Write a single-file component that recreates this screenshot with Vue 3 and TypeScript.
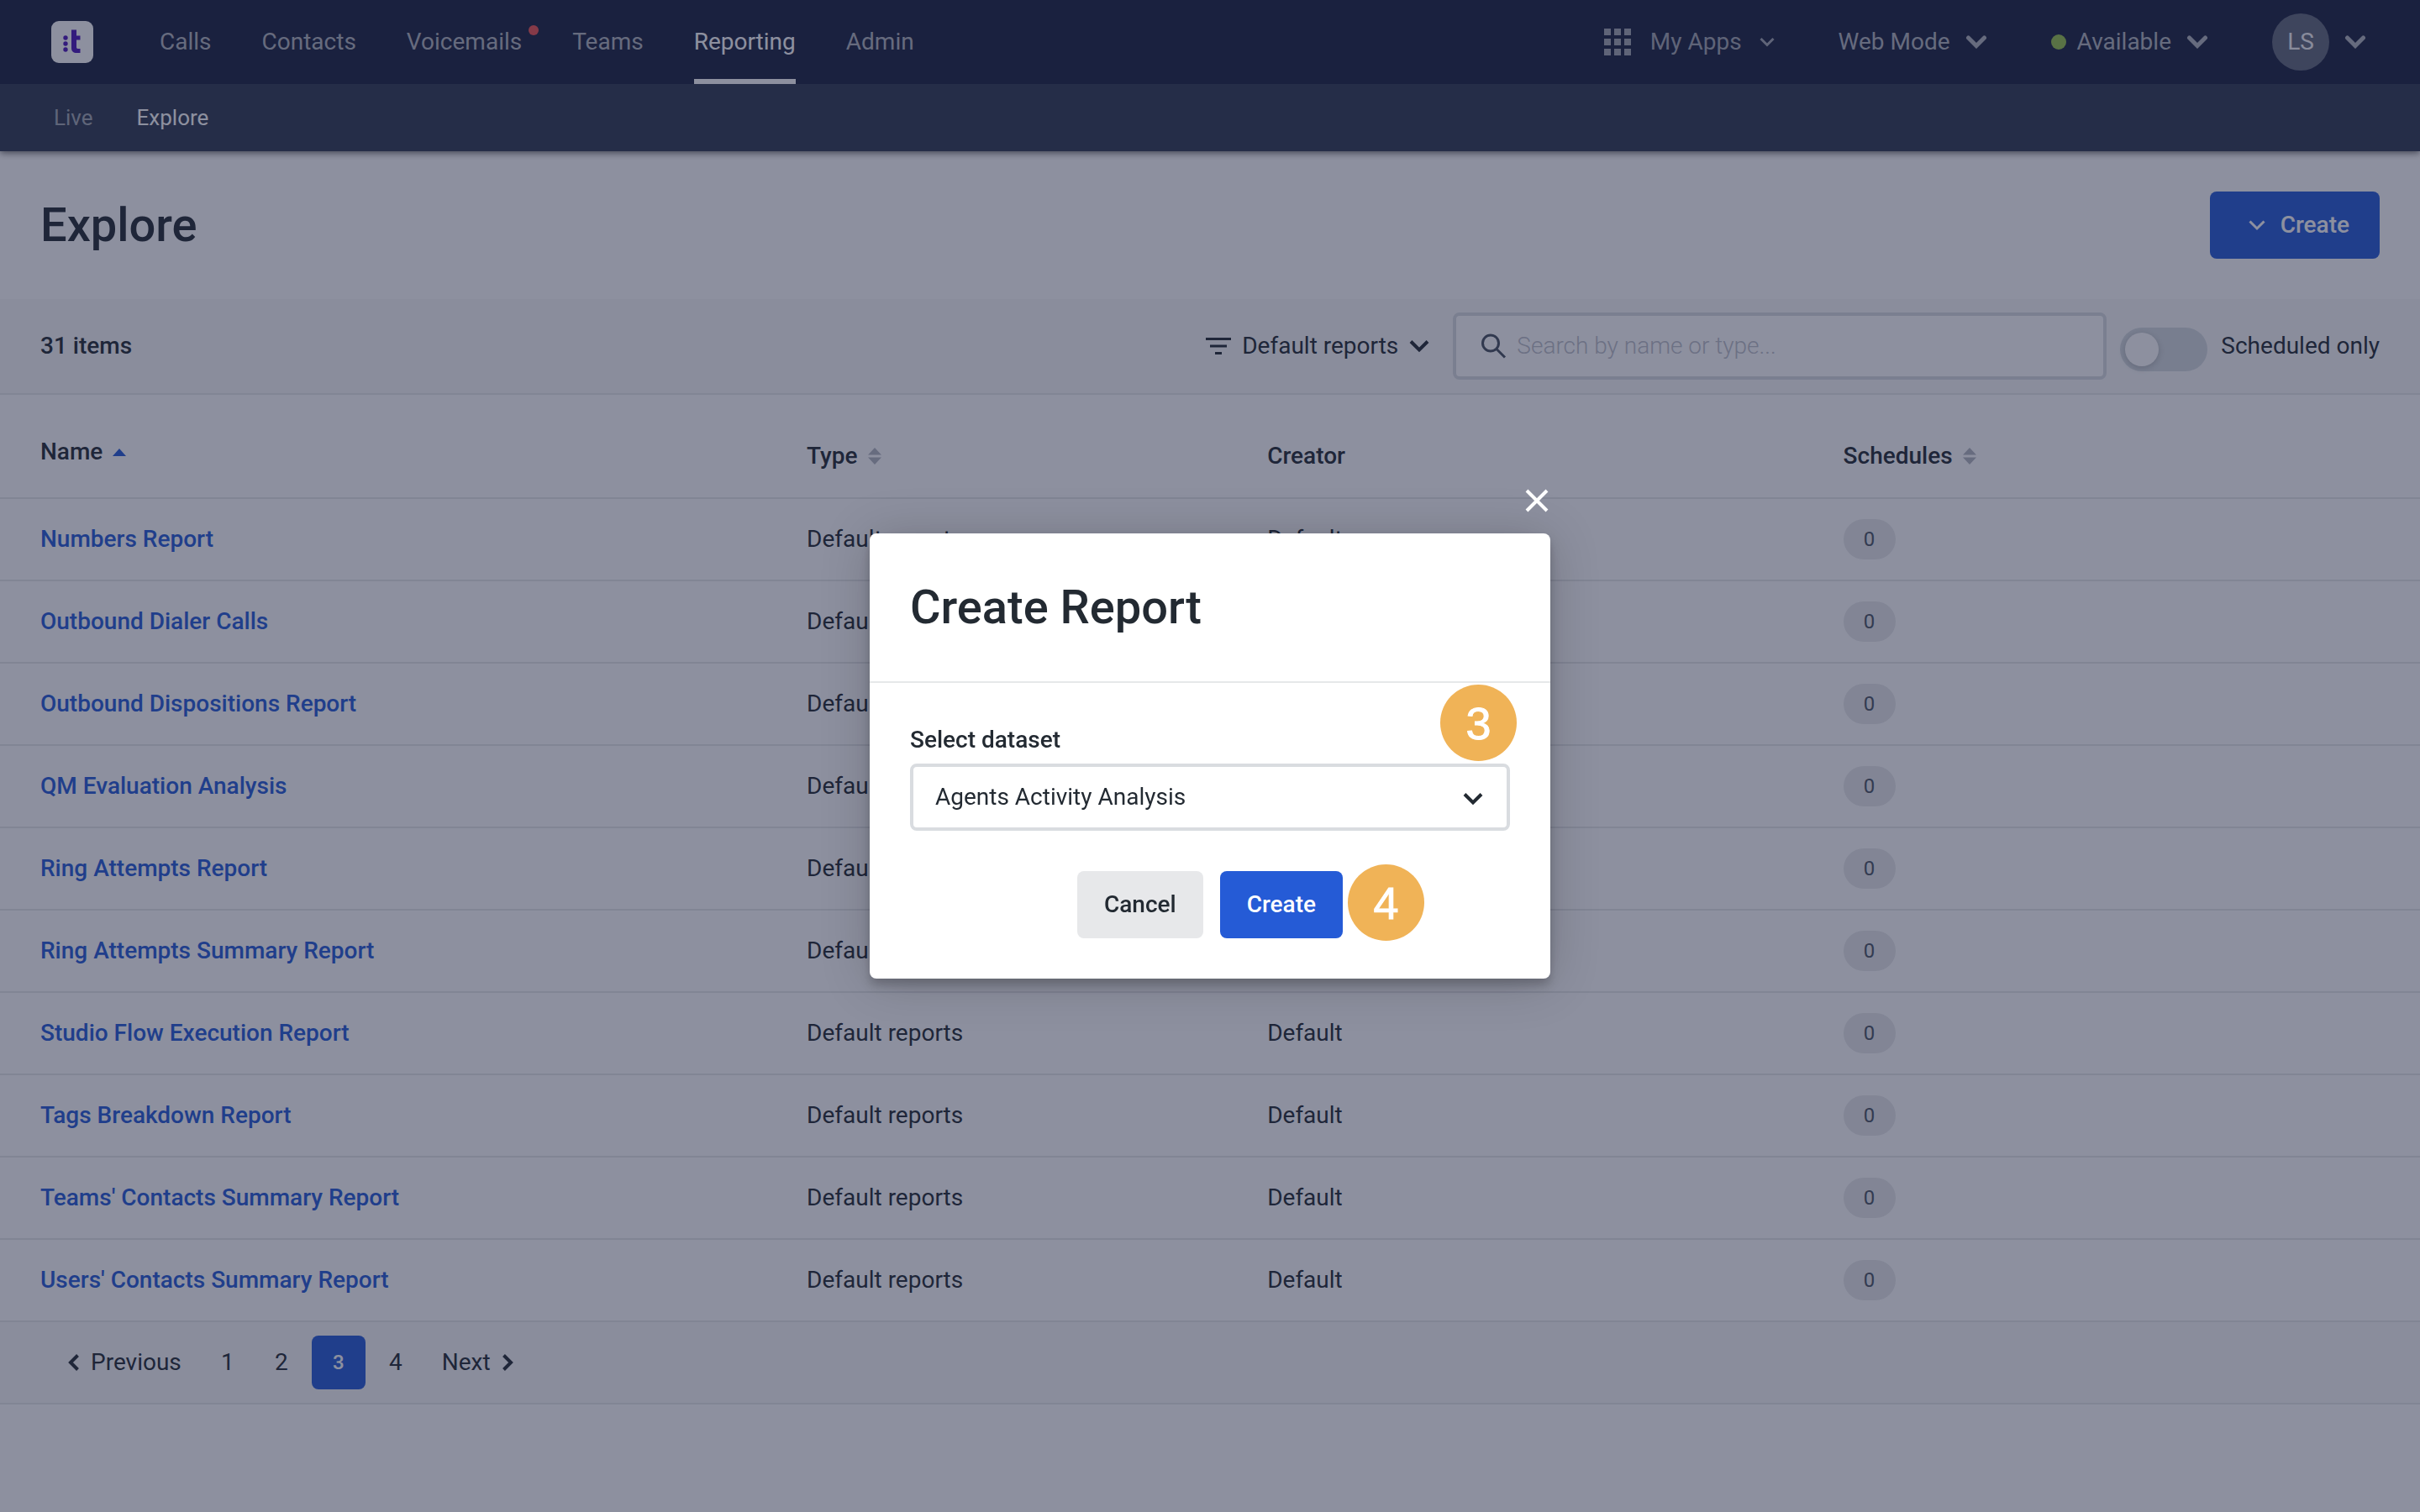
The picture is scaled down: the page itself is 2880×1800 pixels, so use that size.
<script setup lang="ts">
import { ref } from 'vue'

interface NavItem {
  label: string
  active?: boolean
  alert?: boolean
}

interface Column {
  label: string
  sort: 'asc' | 'both' | 'none'
  width: string
}

const navItems: NavItem[] = [
  { label: 'Calls' },
  { label: 'Contacts' },
  { label: 'Voicemails', alert: true },
  { label: 'Teams' },
  { label: 'Reporting', active: true },
  { label: 'Admin' },
]

const columns: Column[] = [
  { label: 'Name', sort: 'asc', width: '31.67%' },
  { label: 'Type', sort: 'both', width: '19.03%' },
  { label: 'Creator', sort: 'none', width: '23.8%' },
  { label: 'Schedules', sort: 'both', width: '25.5%' },
]

const reports: string[] = [
  'Numbers Report',
  'Outbound Dialer Calls',
  'Outbound Dispositions Report',
  'QM Evaluation Analysis',
  'Ring Attempts Report',
  'Ring Attempts Summary Report',
  'Studio Flow Execution Report',
  'Tags Breakdown Report',
  "Teams' Contacts Summary Report",
  "Users' Contacts Summary Report",
]

const pages = [1, 2, 3, 4]
const currentPage = ref(3)
const search = ref('')
const scheduledOnly = ref(false)
const dataset = ref('Agents Activity Analysis')
</script>

<template>
  <div class="page">
    <header class="header">
      <div class="topbar">
        <a href="#" class="logo" aria-label="Home">
          <svg width="50" height="50" viewBox="0 0 50 50">
            <rect width="50" height="50" rx="9" fill="#fff" />
            <circle cx="17" cy="20" r="2.7" />
            <circle cx="17" cy="27" r="2.7" />
            <circle cx="17" cy="34" r="2.7" />
            <path d="M24 10.500h6v7h4.500v5h-4.500v8.500c0 1.300.5 2 1.800 2h2.700v5h-4c-4.300 0-6.500-2-6.500-6z" />
          </svg>
        </a>
        <nav class="nav">
          <a v-for="item in navItems" :key="item.label" href="#" class="nav-link" :class="{ active: item.active }">
            {{ item.label }}<i v-if="item.alert" class="alert"></i>
          </a>
        </nav>
        <div class="tools">
          <button type="button" class="tool apps">
            <svg class="grid-icon" width="32" height="32" viewBox="0 0 32 32">
              <path d="M0 0h8v8H0zM12 0h8v8h-8zM24 0h8v8h-8zM0 12h8v8H0zM12 12h8v8h-8zM24 12h8v8h-8zM0 24h8v8H0zM12 24h8v8h-8zM24 24h8v8h-8z" />
            </svg>
            <span>My Apps</span>
            <svg class="thin" width="18" height="12" viewBox="0 0 18 12"><path d="M1.500 2 9 9.500 16.500 2" /></svg>
          </button>
          <button type="button" class="tool">
            <span>Web Mode</span>
            <svg class="bold" width="26" height="16" viewBox="0 0 26 16"><path d="M3.500 3l9.500 9.500L22.500 3" /></svg>
          </button>
          <button type="button" class="tool status">
            <i class="online"></i>
            <span>Available</span>
            <svg class="bold" width="26" height="16" viewBox="0 0 26 16"><path d="M3.500 3l9.500 9.500L22.500 3" /></svg>
          </button>
          <button type="button" class="tool">
            <span class="avatar">LS</span>
            <svg class="bold" width="26" height="16" viewBox="0 0 26 16"><path d="M3.500 3l9.500 9.500L22.500 3" /></svg>
          </button>
        </div>
      </div>
      <nav class="subnav">
        <a href="#">Live</a>
        <a href="#" class="active">Explore</a>
      </nav>
    </header>

    <main>
      <div class="title-row">
        <h1>Explore</h1>
        <button type="button" class="btn primary with-icon">
          <svg width="20" height="14" viewBox="0 0 20 14"><path d="M1.500 2.500 10 11l8.500-8.500" /></svg>
          Create
        </button>
      </div>

      <div class="toolbar">
        <strong class="count">31 items</strong>
        <button type="button" class="filter">
          <svg width="30" height="20" viewBox="0 0 30 20">
            <path d="M0 0h30v3H0zM5 8.500h20v3H5zM11 17h8v3h-8z" />
          </svg>
          <span>Default reports</span>
          <svg class="chevron" width="24" height="16" viewBox="0 0 24 16"><path d="M2 2.500l10 10 10-10" /></svg>
        </button>
        <label class="search">
          <svg width="32" height="32" viewBox="0 0 32 32">
            <circle cx="13" cy="12.500" r="9.500" />
            <path d="M20 19.500 30 29.500" />
          </svg>
          <input v-model="search" type="text" aria-label="Search" placeholder="Search by name or type..." />
        </label>
        <label class="scheduled">
          <input v-model="scheduledOnly" type="checkbox" class="switch" />
          <span>Scheduled only</span>
        </label>
      </div>

      <table class="reports">
        <colgroup>
          <col v-for="col in columns" :key="col.label" :style="{ width: col.width }" />
        </colgroup>
        <thead>
          <tr>
            <th v-for="col in columns" :key="col.label" scope="col" :class="col.sort">
              <span class="head">
                {{ col.label }}
                <svg v-if="col.sort === 'asc'" class="up" width="16" height="9" viewBox="0 0 16 9"><path d="M8 0l8 9H0z" /></svg>
                <svg v-if="col.sort === 'both'" class="both" width="16" height="20" viewBox="0 0 16 20"><path d="M8 0l8 8.500H0zM0 11.500h16L8 20z" /></svg>
              </span>
            </th>
          </tr>
        </thead>
        <tbody>
          <tr v-for="name in reports" :key="name">
            <td><a href="#">{{ name }}</a></td>
            <td>Default reports</td>
            <td>Default</td>
            <td><span class="pill">0</span></td>
          </tr>
        </tbody>
      </table>

      <nav class="pagination" aria-label="Pages">
        <button type="button" class="step">
          <svg width="14" height="20" viewBox="0 0 14 20"><path d="M11.500 1.500 3 10l8.500 8.500" /></svg>
          Previous
        </button>
        <button
          v-for="page in pages"
          :key="page"
          type="button"
          class="page-number"
          :class="{ current: page === currentPage }"
          @click="currentPage = page"
        >{{ page }}</button>
        <button type="button" class="step">
          Next
          <svg width="14" height="20" viewBox="0 0 14 20"><path d="M2.500 1.500 11 10l-8.500 8.500" /></svg>
        </button>
      </nav>
    </main>

    <div class="overlay">
      <section class="modal" role="dialog" aria-modal="true" aria-labelledby="modal-title">
        <button type="button" class="close" aria-label="Close">
          <svg width="28" height="28" viewBox="0 0 28 28"><path d="M2 2l24 24M26 2 2 26" /></svg>
        </button>
        <div class="modal-head">
          <h2 id="modal-title">Create Report</h2>
        </div>
        <div class="modal-body">
          <label for="dataset">Select dataset</label>
          <div class="select">
            <select id="dataset" v-model="dataset">
              <option>Agents Activity Analysis</option>
            </select>
            <svg class="chevron" width="24" height="16" viewBox="0 0 24 16"><path d="M2 2.500l10 10 10-10" /></svg>
            <span class="step-badge step-three">3</span>
          </div>
          <div class="actions">
            <button type="button" class="btn secondary">Cancel</button>
            <div class="confirm">
              <button type="button" class="btn primary">Create</button>
              <span class="step-badge step-four">4</span>
            </div>
          </div>
        </div>
      </section>
    </div>
  </div>
</template>

<style>
body {
  background: #fff;
}
</style>

<style scoped>
.page {
  min-height: 100vh;
  font-family: Roboto, 'Liberation Sans', sans-serif;
  font-size: 28px;
  line-height: 40px;
  color: #232a32;
  background: #fff;
}
*,
*::before {
  box-sizing: border-box;
}
a {
  text-decoration: none;
}
button,
input,
select {
  font: inherit;
  color: inherit;
}
button {
  padding: 0;
  border: 0;
  background: none;
  white-space: nowrap;
}
svg {
  display: block;
  flex: none;
}

.header {
  position: relative;
  box-shadow: 0 2px 8px rgba(0, 0, 0, 0.6);
}
.topbar {
  display: flex;
  align-items: center;
  height: 100px;
  padding: 0 64px 0 61px;
  background: #19213f;
}
.logo svg {
  fill: #4b14ba;
}
.nav {
  display: flex;
  align-self: stretch;
  gap: 60px;
  margin-left: 79px;
}
.nav-link {
  position: relative;
  display: flex;
  align-items: center;
  padding-top: 6px;
  border-bottom: 6px solid transparent;
  color: #b1b5bc;
}
.nav-link.active {
  color: #fff;
  border-color: #fff;
}
.alert {
  position: absolute;
  top: 30px;
  right: -20px;
  width: 12px;
  height: 12px;
  border-radius: 50%;
  background: #ee5351;
}
.tools {
  display: flex;
  align-items: center;
  gap: 76px;
  margin-left: auto;
}
.tool {
  display: flex;
  align-items: center;
  gap: 18px;
  color: #b1b5bc;
}
.apps {
  gap: 23px;
  color: #a3a7b1;
}
.apps .thin {
  margin-left: -2px;
}
.status {
  gap: 13px;
}
.status .bold {
  margin-left: 5px;
}
.grid-icon {
  fill: currentColor;
}
.thin,
.bold {
  fill: none;
  stroke: currentColor;
}
.thin {
  stroke-width: 3;
}
.bold {
  stroke-width: 5;
  stroke-linecap: round;
}
.online {
  width: 18px;
  height: 18px;
  border-radius: 50%;
  background: #96c24a;
}
.avatar {
  display: flex;
  align-items: center;
  justify-content: center;
  width: 68px;
  height: 68px;
  border-radius: 50%;
  background: #61687b;
  color: #f4f4f6;
}
.subnav {
  display: flex;
  align-items: center;
  gap: 52px;
  height: 80px;
  padding: 0 64px;
  font-size: 26px;
  background: #2f3951;
}
.subnav a {
  color: #a3a9b3;
}
.subnav .active {
  color: #fff;
}

.title-row {
  display: flex;
  align-items: center;
  justify-content: space-between;
  height: 176px;
  padding: 0 48px;
}
h1,
h2 {
  margin: 0;
  font-size: 56px;
  line-height: 64px;
  font-weight: 500;
}
.btn {
  height: 80px;
  padding: 0 32px;
  border-radius: 8px;
  font-weight: 500;
}
.primary {
  background: #255bd6;
  color: #fff;
}
.secondary {
  background: #e7e8ea;
}
.with-icon {
  display: flex;
  align-items: center;
  gap: 18px;
  padding: 0 36px 0 46px;
}
.with-icon svg {
  fill: none;
  stroke: currentColor;
  stroke-width: 3;
}

.toolbar {
  display: flex;
  align-items: center;
  height: 114px;
  padding: 0 48px;
  border-bottom: 2px solid #e6e8e9;
  background: #f8f9f9;
}
.count {
  font-weight: 500;
}
.filter {
  display: flex;
  align-items: center;
  gap: 13px;
  margin-left: auto;
}
.filter svg:first-child {
  fill: currentColor;
}
.chevron {
  fill: none;
  stroke: #232a32;
  stroke-width: 4;
}
.search {
  display: flex;
  align-items: center;
  gap: 12px;
  width: 778px;
  height: 80px;
  margin-left: 28px;
  padding: 0 28px;
  border: 4px solid #d9dce0;
  border-radius: 8px;
  background: #fff;
}
.search svg {
  fill: none;
  stroke: #47515f;
  stroke-width: 3;
}
.search input {
  flex: 1;
  min-width: 0;
  padding: 0;
  border: 0;
  outline: 0;
  background: none;
}
.search input::placeholder {
  color: #bcc0c8;
  font-weight: 300;
  opacity: 1;
}
.scheduled {
  display: flex;
  align-items: center;
  gap: 16px;
  margin-left: 16px;
}
.switch {
  appearance: none;
  width: 104px;
  height: 52px;
  margin: 8px 0 0;
  padding: 6px;
  border-radius: 26px;
  background: #d5dbdf;
}
.switch::before {
  content: '';
  display: block;
  width: 40px;
  height: 40px;
  border-radius: 50%;
  background: #fff;
  box-shadow: 0 2px 8px rgba(0, 0, 0, 0.2);
}

.reports {
  width: 100%;
  table-layout: fixed;
  border-collapse: separate;
  border-spacing: 0;
}
th,
td {
  height: 98px;
  padding: 0 0 0 48px;
  border-bottom: 2px solid #e6e8e9;
  text-align: left;
  white-space: nowrap;
}
th {
  height: 124px;
  padding-top: 24px;
  font-weight: 500;
}
th.asc {
  padding-top: 14px;
}
.head {
  display: flex;
  align-items: center;
  gap: 12px;
}
.up {
  fill: #255bd6;
}
.both {
  fill: #b3b6bf;
}
td a {
  color: #255bd6;
  font-weight: 500;
}
.pill {
  display: flex;
  align-items: center;
  justify-content: center;
  width: 62px;
  height: 48px;
  border-radius: 24px;
  background: #e8e9ea;
  color: #4a5462;
  font-size: 24px;
}

.pagination {
  display: flex;
  align-items: center;
  height: 98px;
  padding: 0 81px;
  border-bottom: 2px solid #e6e8e9;
  background: #f8f9f9;
}
.step {
  display: flex;
  align-items: center;
  gap: 13px;
}
.step:first-child {
  margin-right: 23px;
}
.step:last-child {
  margin-left: 23px;
}
.step svg {
  fill: none;
  stroke: currentColor;
  stroke-width: 4;
}
.page-number {
  width: 64px;
  height: 64px;
}
.page-number.current {
  margin: 0 4px;
  border-radius: 8px;
  background: #255bd6;
  color: #fff;
  font-size: 24px;
  font-weight: 500;
}

.overlay {
  position: fixed;
  inset: 0;
  display: flex;
  align-items: center;
  justify-content: center;
  background: rgba(27, 33, 63, 0.5);
}
.modal {
  position: relative;
  width: 810px;
  border-radius: 8px;
  background: #fff;
  box-shadow: 0 8px 12px rgba(0, 0, 0, 0.2), 0 4px 60px rgba(0, 0, 0, 0.2);
}
.close {
  position: absolute;
  right: 2px;
  bottom: calc(100% + 25px);
}
.close svg {
  fill: none;
  stroke: #fff;
  stroke-width: 4;
}
.modal-head {
  padding: 56px 48px;
  border-bottom: 2px solid #e6e8e9;
}
.modal-body {
  padding: 48px;
}
.modal-body label {
  display: block;
  margin-bottom: 8px;
  font-weight: 500;
}
.select {
  position: relative;
}
.select select {
  display: block;
  appearance: none;
  width: 100%;
  height: 80px;
  padding: 0 80px 0 26px;
  border: 4px solid #d9dce0;
  border-radius: 8px;
  background: #fff;
}
.select .chevron {
  position: absolute;
  top: 34px;
  right: 32px;
}
.actions {
  display: flex;
  justify-content: center;
  gap: 20px;
  margin-top: 48px;
}
.confirm {
  position: relative;
}
.step-badge {
  position: absolute;
  display: flex;
  align-items: center;
  justify-content: center;
  width: 91px;
  height: 91px;
  border-radius: 50%;
  background: #f0b357;
  color: #fff;
  font-family: 'Liberation Sans', Arial, sans-serif;
  font-size: 54px;
  -webkit-text-stroke: 1px #fff;
}
.step-three {
  right: -8px;
  bottom: calc(100% + 3px);
}
.step-four {
  left: calc(100% + 6px);
  top: -8px;
}
</style>
